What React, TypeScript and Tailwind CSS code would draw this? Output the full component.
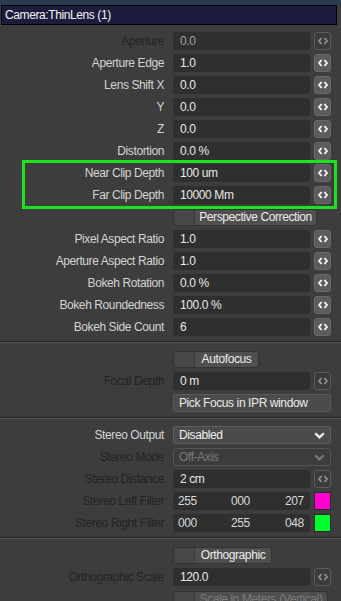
import React from 'react'

type RowProps = {
  label: string
  value: string
  dim?: boolean
  dimValue?: boolean
  dimButton?: boolean
}

const ArrowsIcon = ({ color }: { color: string }) => (
  <svg width="10" height="8" viewBox="0 0 10 8" fill="none">
    <path d="M3.6 1 L1 4 L3.6 7" stroke={color} strokeWidth="1.9" strokeLinejoin="miter" />
    <path d="M6.4 1 L9 4 L6.4 7" stroke={color} strokeWidth="1.9" strokeLinejoin="miter" />
  </svg>
)

const Chevron = ({ color }: { color: string }) => (
  <svg width="11" height="7" viewBox="0 0 11 7" fill="none">
    <path d="M1.2 1.2 L5.5 5.4 L9.8 1.2" stroke={color} strokeWidth="2.2" />
  </svg>
)

function Label({ text, dim }: { text: string; dim?: boolean }) {
  return (
    <div
      className={`w-[164px] shrink-0 pr-px text-right whitespace-nowrap ${dim ? 'text-[#232323]' : 'text-[#d4d4d4]'}`}
    >
      {text}
    </div>
  )
}

function SpinButton({ dim }: { dim?: boolean }) {
  return (
    <div
      className={`ml-[4px] flex h-[18px] w-[17px] items-center justify-center rounded-[3px] border ${
        dim ? 'border-[#5a5a5a] bg-[#3b3b3b]' : 'border-[#686868] bg-[#5b5b5b]'
      }`}
    >
      <ArrowsIcon color={dim ? '#8c8c8c' : '#f4f4f4'} />
    </div>
  )
}

function NumberRow({ label, value, dim, dimValue, dimButton }: RowProps) {
  return (
    <div className="flex h-[18px] items-center">
      <Label text={label} dim={dim} />
      <div
        className={`ml-[8px] flex h-[18px] w-[137px] items-center rounded-[3px] bg-[#2f2f2f] pl-[7px] ${
          dimValue ? 'text-[#a2a2a2]' : 'text-[#e8e8e8]'
        }`}
      >
        {value}
      </div>
      <SpinButton dim={dimButton} />
    </div>
  )
}

function ToggleButton({ text, width, disabled }: { text: string; width: string; disabled?: boolean }) {
  return (
    <div className="flex h-[18px] items-center">
      <div className="w-[172px] shrink-0" />
      <div className={`flex h-[17px] ${width} overflow-hidden rounded-[3px] border border-[#333]`}>
        <div className="w-[21px] shrink-0 border-r border-[#3a3a3a] bg-[#474747]" />
        <div
          className={`flex flex-1 items-center justify-center whitespace-nowrap bg-[#4f4f4f] leading-none ${
            disabled ? 'text-[#7c7c7c]' : 'text-[#ececec]'
          }`}
        >
          {text}
        </div>
      </div>
    </div>
  )
}

function SelectRow({ label, value, disabled }: { label: string; value: string; disabled?: boolean }) {
  return (
    <div className="flex h-[18px] items-center">
      <Label text={label} dim={disabled} />
      <div
        className={`ml-[8px] flex h-[18px] w-[158px] items-center justify-between rounded-[3px] border pl-[5px] pr-[5px] ${
          disabled
            ? 'border-[#555] bg-[#3c3c3c] text-[#7a7a7a]'
            : 'border-[#5e5e5e] bg-[#4b4b4b] text-[#f0f0f0]'
        }`}
      >
        <span>{value}</span>
        <Chevron color={disabled ? '#777' : '#f2f2f2'} />
      </div>
    </div>
  )
}

function ColorRow({ label, rgb, swatch }: { label: string; rgb: [string, string, string]; swatch: string }) {
  return (
    <div className="flex h-[18px] items-center">
      <Label text={label} dim />
      <div className="ml-[8px] flex h-[18px] w-[137px] items-center rounded-[3px] bg-[#2f2f2f] pl-[5px] text-[#d8d8d8]">
        <span className="w-[53px]">{rgb[0]}</span>
        <span className="w-[54px]">{rgb[1]}</span>
        <span>{rgb[2]}</span>
      </div>
      <div className={`ml-[4px] h-[18px] w-[17px] border border-[#2a2a2a] ${swatch}`} />
    </div>
  )
}

function Separator() {
  return <div className="mb-[7px] mt-[5px] h-[2px] border-b border-t border-b-[#555] border-t-[#262626]" />
}

export default function App() {
  return (
    <div className="relative h-[601px] w-[341px] overflow-hidden bg-[#3d3d3d] font-['Liberation_Sans',Arial,sans-serif] text-[12px] leading-none tracking-[-0.4px]">
      <div className="h-[5px] bg-[#2b3c50]" />
      <div className="ml-px h-[20px] w-[336px] border border-black bg-[#1d1c3c] pl-[3px] leading-[18px] text-[#f4f4f4]">
        Camera:ThinLens (1)
      </div>

      <div className="mt-[7px] flex flex-col gap-[4px] pl-px">
        <NumberRow label="Aperture" value="0.0" dim dimValue dimButton />
        <NumberRow label="Aperture Edge" value="1.0" />
        <NumberRow label="Lens Shift X" value="0.0" />
        <NumberRow label="Y" value="0.0" />
        <NumberRow label="Z" value="0.0" />
        <NumberRow label="Distortion" value="0.0 %" />
        <NumberRow label="Near Clip Depth" value="100 um" />
        <NumberRow label="Far Clip Depth" value="10000 Mm" />
        <ToggleButton text="Perspective Correction" width="w-[144px]" />
        <NumberRow label="Pixel Aspect Ratio" value="1.0" />
        <NumberRow label="Aperture Aspect Ratio" value="1.0" />
        <NumberRow label="Bokeh Rotation" value="0.0 %" />
        <NumberRow label="Bokeh Roundedness" value="100.0 %" />
        <NumberRow label="Bokeh Side Count" value="6" />
      </div>

      <Separator />

      <div className="flex flex-col gap-[4px] pl-px">
        <ToggleButton text="Autofocus" width="w-[86px]" />
        <NumberRow label="Focal Depth" value="0 m" dim dimButton />
        <div className="flex h-[18px] items-center">
          <div className="w-[172px] shrink-0" />
          <div className="flex h-[18px] w-[158px] items-center rounded-[3px] border border-[#5a5a5a] bg-[#4b4b4b] pl-[5px] text-[#ececec]">
            Pick Focus in IPR window
          </div>
        </div>
      </div>

      <Separator />

      <div className="flex flex-col gap-[4px] pl-px">
        <SelectRow label="Stereo Output" value="Disabled" />
        <SelectRow label="Stereo Mode" value="Off-Axis" disabled />
        <NumberRow label="Stereo Distance" value="2 cm" dim dimButton />
        <ColorRow label="Stereo Left Filter" rgb={['255', '000', '207']} swatch="bg-[#ff00cf]" />
        <ColorRow label="Stereo Right Filter" rgb={['000', '255', '048']} swatch="bg-[#00ff30]" />
      </div>

      <Separator />

      <div className="flex flex-col gap-[4px] pl-px">
        <ToggleButton text="Orthographic" width="w-[99px]" />
        <NumberRow label="Orthographic Scale" value="120.0" dim dimButton />
        <ToggleButton text="Scale in Meters (Vertical)" width="w-[155px]" disabled />
      </div>

      {/* selection highlight */}
      <div className="absolute left-[22px] top-[160px] h-[49px] w-[315px] border-[3px] border-[#1fe21f]" />
    </div>
  )
}
